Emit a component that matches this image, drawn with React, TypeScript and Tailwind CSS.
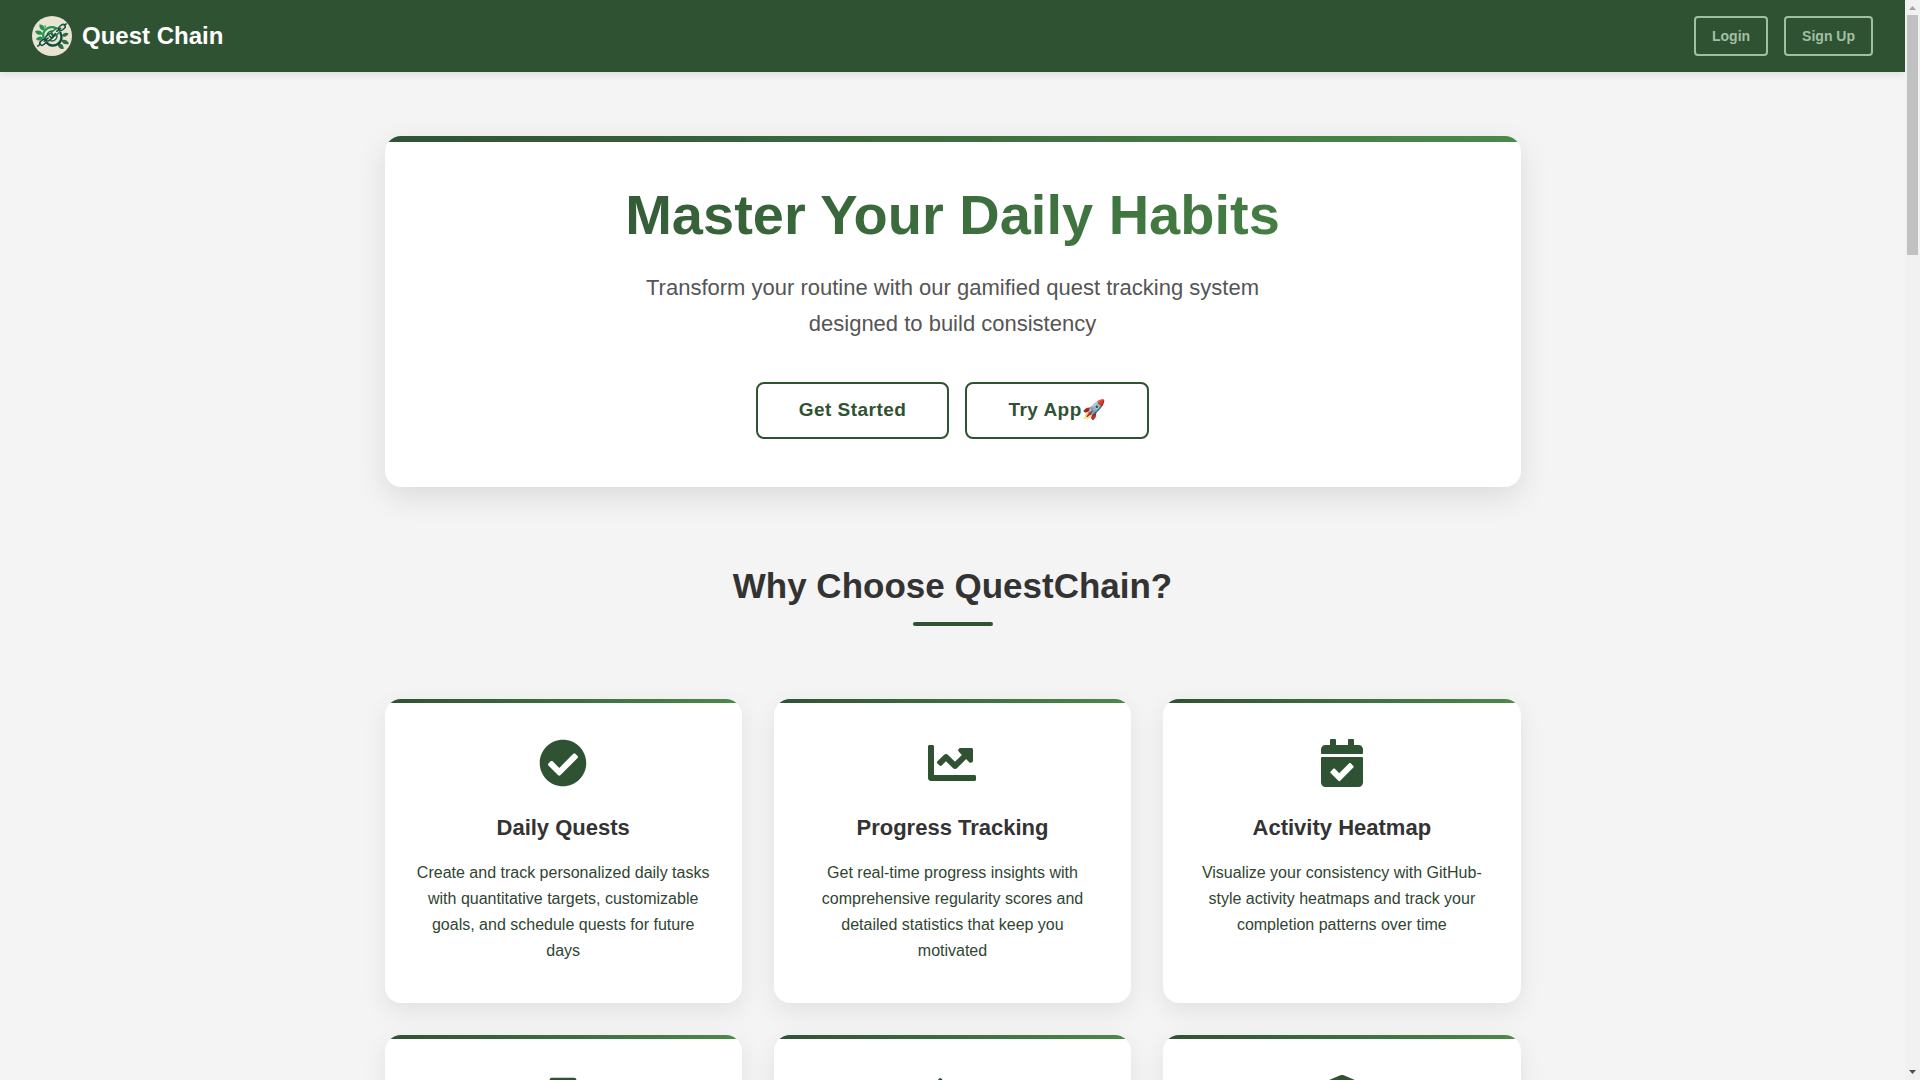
import type { IconType } from 'react-icons'
import {
  FaCalendarCheck,
  FaChartLine,
  FaCheckCircle,
  FaShieldAlt,
  FaTasks,
  FaTrophy,
} from 'react-icons/fa'

type Feature = {
  icon: IconType
  title: string
  text: string
}

const features: Feature[] = [
  {
    icon: FaCheckCircle,
    title: 'Daily Quests',
    text: 'Create and track personalized daily tasks with quantitative targets, customizable goals, and schedule quests for future days',
  },
  {
    icon: FaChartLine,
    title: 'Progress Tracking',
    text: 'Get real-time progress insights with comprehensive regularity scores and detailed statistics that keep you motivated',
  },
  {
    icon: FaCalendarCheck,
    title: 'Activity Heatmap',
    text: 'Visualize your consistency with GitHub-style activity heatmaps and track your completion patterns over time',
  },
  { icon: FaTrophy, title: '', text: '' },
  { icon: FaTasks, title: '', text: '' },
  { icon: FaShieldAlt, title: '', text: '' },
]

function Logo() {
  return (
    <svg viewBox="0 0 40 40" className="h-10 w-10" aria-hidden="true">
      <circle cx="20" cy="20" r="20" fill="#e9e3d3" />
      <g fill="#23924a">
        <path d="M7.500 8.500c4 0 5.500 2.500 5 6-4 0-5.500-2.500-5-6z" />
        <path d="M3 15c4-1.500 7 0 8 3.500-4 1-7 0-8-3.500z" />
        <path d="M4 23c2-3 5-3.500 7-1-2 3-5 3.500-7 1z" />
        <path d="M12.500 9l.5 4 1-3z" />
      </g>
      <g fill="#2d6a45">
        <path d="M30 20c1-3 4-4 6.500-2.500-1 3-4 4-6.500 2.500z" />
        <path d="M29 24c4-1 7 .5 8 4-4 1-7-.5-8-4z" />
        <path d="M26 27.500c4 0 6 2 5.500 5.500-4 0-6-2-5.500-5.500z" />
      </g>
      <g fill="none" strokeLinecap="round">
        <path d="M11.500 22a8.500 8.500 0 0 1 14.500-8" stroke="#1f9a4c" strokeWidth="2.400" />
        <path d="M28.500 17a8.500 8.500 0 0 1-14 9.500" stroke="#124a3d" strokeWidth="2.400" />
        <circle cx="20" cy="20" r="5" stroke="#1b6a44" strokeWidth="1.500" />
        <g transform="rotate(-38 20 19)">
          <path d="M7 19h26" stroke="#e9e3d3" strokeWidth="5" />
          <rect x="5" y="17" width="7" height="4.400" rx="2.200" stroke="#124a3d" strokeWidth="1.500" />
          <rect x="12" y="16.500" width="9" height="5" rx="2.500" stroke="#155a40" strokeWidth="1.500" />
          <rect x="20" y="16.500" width="9" height="5" rx="2.500" stroke="#1b7a48" strokeWidth="1.500" />
          <rect x="29" y="17" width="7" height="4.400" rx="2.200" stroke="#155a40" strokeWidth="1.500" />
          <path d="M2 19h3M10 19h5M26 19h5M36 19h2" stroke="#124a3d" strokeWidth="1.500" />
        </g>
        <path d="M17.500 20l2 2 4-4.500" stroke="#124a3d" strokeWidth="1.500" />
      </g>
    </svg>
  )
}

function FeatureCard({ icon: Icon, title, text }: Feature) {
  return (
    <div className="overflow-hidden rounded-2xl bg-white shadow-[0_8px_24px_rgba(0,0,0,0.08)]">
      <div className="h-1 bg-linear-to-r from-[#2f5233] to-[#4a8a48]" />
      <div className="px-8 pt-9 pb-[39px] text-center">
        <Icon className="mx-auto mb-6 text-5xl text-[#2f5233]" />
        <h3 className="mb-[15px] min-h-[34px] text-[22px] leading-[34px] font-bold text-[#333333]">{title}</h3>
        <p className="min-h-26 text-base leading-[26px] text-[#2f4532]">{text}</p>
      </div>
    </div>
  )
}

function Scrollbar() {
  return (
    <div className="flex w-[15px] shrink-0 flex-col items-center bg-[#f1f1f1]" aria-hidden="true">
      <svg viewBox="0 0 15 15" className="h-[15px] w-[15px]">
        <path d="M4 10h7L7.500 6z" fill="#a3a3a3" />
      </svg>
      <div className="h-60 w-[11px] bg-[#c1c1c1]" />
      <svg viewBox="0 0 15 15" className="mt-auto h-[15px] w-[15px]">
        <path d="M4 5h7L7.500 9z" fill="#505050" />
      </svg>
    </div>
  )
}

export default function App() {
  return (
    <div className="flex h-screen bg-[#f4f4f4] font-['Liberation_Sans',Arial,sans-serif]">
      <div className="min-w-0 flex-1 overflow-y-auto [scrollbar-width:none]">
        <header className="flex items-center justify-between bg-[#2f5233] px-8 py-4 shadow-[0_2px_8px_rgba(0,0,0,0.1)]">
          <a href="#" className="flex items-center gap-2.5 text-2xl font-bold text-white">
            <Logo />
            Quest Chain
          </a>
          <nav className="flex gap-4">
            <button className="h-10 rounded border-2 border-[#a3bfa3] px-4 text-sm font-bold text-[#a3bfa3]">
              Login
            </button>
            <button className="h-10 rounded border-2 border-[#a3bfa3] px-4 text-sm font-bold text-[#a3bfa3]">
              Sign Up
            </button>
          </nav>
        </header>

        <main className="mx-auto max-w-[1200px] px-8 py-16">
          <section className="overflow-hidden rounded-2xl bg-white text-center shadow-[0_10px_30px_rgba(0,0,0,0.1)]">
            <div className="h-1.5 bg-linear-to-r from-[#2f5233] to-[#4a8a48]" />
            <div className="px-8 pt-[42px] pb-12">
              <h1 className="mb-6 bg-linear-135 from-[#2f5233] to-[#4a8a48] bg-clip-text text-[56px] leading-[62px] font-bold text-transparent">
                Master Your Daily Habits
              </h1>
              <p className="mx-auto mb-10 max-w-[700px] text-[22px] leading-9 text-[#555555]">
                Transform your routine with our gamified quest tracking system designed to build consistency
              </p>
              <div className="flex justify-center gap-4">
                <button className="rounded-lg border-2 border-[#2f5233] px-[41px] pt-[11px] pb-[13px] text-[19px] leading-[29px] font-bold tracking-wide text-[#2f5233]">
                  Get Started
                </button>
                <button className="rounded-lg border-2 border-[#2f5233] px-[41px] pt-[11px] pb-[13px] text-[19px] leading-[29px] font-bold tracking-wide text-[#2f5233]">
                  Try App🚀
                </button>
              </div>
            </div>
          </section>

          <section className="mt-18">
            <h2 className="text-center text-[35px] leading-[53px] font-bold text-[#333333]">
              Why Choose QuestChain?
            </h2>
            <div className="mx-auto mt-2.5 mb-[73px] h-1 w-20 rounded-xs bg-[#2f5233]" />
            <div className="grid grid-cols-3 gap-8">
              {features.map((feature, i) => (
                <FeatureCard key={i} {...feature} />
              ))}
            </div>
          </section>
        </main>
      </div>
      <Scrollbar />
    </div>
  )
}
